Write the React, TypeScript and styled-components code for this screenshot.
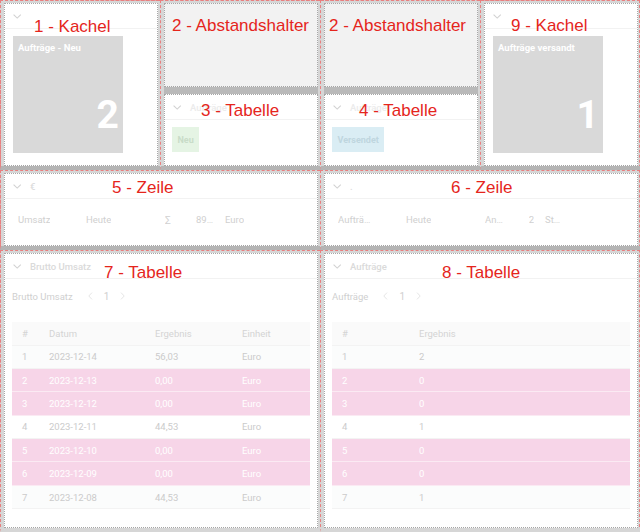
import React from 'react';
import styled, { createGlobalStyle } from 'styled-components';

const GlobalStyle = createGlobalStyle`
  html, body {
    margin: 0;
    padding: 0;
    background: #d6d6d6;
  }
  body {
    font-family: Roboto, "Noto Sans", sans-serif;
  }
  * {
    box-sizing: border-box;
  }
`;

interface LineItem {
  label: string;
  period: string;
  kind: string;
  value: string;
  unit: string;
}

interface TableRow {
  cells: string[];
  alert?: boolean;
}

const umsatzRows: TableRow[] = [
  { cells: ['1', '2023-12-14', '56,03', 'Euro'] },
  { cells: ['2', '2023-12-13', '0,00', 'Euro'], alert: true },
  { cells: ['3', '2023-12-12', '0,00', 'Euro'], alert: true },
  { cells: ['4', '2023-12-11', '44,53', 'Euro'] },
  { cells: ['5', '2023-12-10', '0,00', 'Euro'], alert: true },
  { cells: ['6', '2023-12-09', '0,00', 'Euro'], alert: true },
  { cells: ['7', '2023-12-08', '44,53', 'Euro'] },
];

const auftragRows: TableRow[] = [
  { cells: ['1', '2'] },
  { cells: ['2', '0'], alert: true },
  { cells: ['3', '0'], alert: true },
  { cells: ['4', '1'] },
  { cells: ['5', '0'], alert: true },
  { cells: ['6', '0'], alert: true },
  { cells: ['7', '1'] },
];

function Chevron() {
  return (
    <ChevronIcon width="9" height="5" viewBox="0 0 9 5">
      <path d="M0.6 0.6 L4.2 4.1 L7.8 0.6" fill="none" stroke="currentColor" strokeWidth="1.1" />
    </ChevronIcon>
  );
}

function PagerArrow({ dir }: { dir: 'left' | 'right' }) {
  return (
    <ArrowIcon width="5" height="8" viewBox="0 0 5 8">
      <path
        d={dir === 'left' ? 'M4 0.6 L0.8 4 L4 7.4' : 'M1 0.6 L4.2 4 L1 7.4'}
        fill="none"
        stroke="currentColor"
        strokeWidth="0.9"
      />
    </ArrowIcon>
  );
}

function Header({ title, tone }: { title?: string; tone?: string }) {
  return (
    <PanelHeader>
      <Chevron />
      {title ? <HeaderTitle $tone={tone}>{title}</HeaderTitle> : null}
    </PanelHeader>
  );
}

function Kachel({ title, value }: { title: string; value: string }) {
  return (
    <Panel>
      <Header />
      <KachelBody>
        <Tile>
          <TileTitle>{title}</TileTitle>
          <TileValue>{value}</TileValue>
        </Tile>
      </KachelBody>
    </Panel>
  );
}

function BadgeTable({ label, bg, fg }: { label: string; bg: string; fg: string }) {
  return (
    <Stack>
      <Spacer />
      <Panel>
        <Header title="Aufträge" tone="#ebebeb" />
        <BadgeBody>
          <Badge $bg={bg} $fg={fg}>{label}</Badge>
        </BadgeBody>
      </Panel>
    </Stack>
  );
}

function Zeile({ title, item }: { title: string; item: LineItem }) {
  return (
    <Panel>
      <Header title={title} tone="#dcdcdc" />
      <LineBody>
        <Line>
          <LineCell $max={34}>{item.label}</LineCell>
          <LineCell>{item.period}</LineCell>
          <LineCell $max={20}>{item.kind}</LineCell>
          <LineCell $max={18} $right>{item.value}</LineCell>
          <LineCell $max={19.5} $pad={11}>{item.unit}</LineCell>
        </Line>
      </LineBody>
    </Panel>
  );
}

function Tabelle({
  title,
  columns,
  widths,
  rows,
}: {
  title: string;
  columns: string[];
  widths: number[];
  rows: TableRow[];
}) {
  return (
    <Panel>
      <Header title={title} />
      <TableBody>
        <Pager>
          <PagerLabel>{title}</PagerLabel>
          <PagerNav>
            <PagerArrow dir="left" />
            <PageNumber>1</PageNumber>
            <PagerArrow dir="right" />
          </PagerNav>
        </Pager>
        <DataTable>
          <colgroup>
            {widths.map((w, i) => (
              <col key={i} style={{ width: w }} />
            ))}
          </colgroup>
          <thead>
            <tr>
              {columns.map((c) => (
                <HeadCell key={c}>{c}</HeadCell>
              ))}
            </tr>
          </thead>
          <tbody>
            {rows.map((r, i) => (
              <Row key={i} $tone={r.alert ? 'alert' : i % 2 === 0 ? 'odd' : 'even'}>
                {r.cells.map((c, j) => (
                  <DataCell key={j}>{c}</DataCell>
                ))}
              </Row>
            ))}
          </tbody>
        </DataTable>
      </TableBody>
    </Panel>
  );
}

export default function App() {
  return (
    <>
      <GlobalStyle />
      <Board>
        <Cell>
          <Kachel title="Aufträge - Neu" value="2" />
          <Label $top={17} $left={33}>1 - Kachel</Label>
        </Cell>
        <Cell>
          <BadgeTable label="Neu" bg="#e5f4e4" fg="#c9dcc8" />
          <Label $top={16} $left={11}>2 - Abstandshalter</Label>
          <Label $top={101} $left={40}>3 - Tabelle</Label>
        </Cell>
        <Cell>
          <BadgeTable label="Versendet" bg="#daedf4" fg="#bfd6df" />
          <Label $top={16} $left={8}>2 - Abstandshalter</Label>
          <Label $top={101} $left={38}>4 - Tabelle</Label>
        </Cell>
        <Cell>
          <Kachel title="Aufträge versandt" value="1" />
          <Label $top={16} $left={30}>9 - Kachel</Label>
        </Cell>

        <Cell $span={2}>
          <Zeile
            title="€"
            item={{ label: 'Umsatz', period: 'Heute', kind: '∑', value: '89,06', unit: 'Euro' }}
          />
          <Label $top={8} $left={111}>5 - Zeile</Label>
        </Cell>
        <Cell $span={2}>
          <Zeile
            title="."
            item={{ label: 'Aufträge', period: 'Heute', kind: 'Anzahl', value: '2', unit: 'Stück' }}
          />
          <Label $top={8} $left={130}>6 - Zeile</Label>
        </Cell>

        <Cell $span={2} $last>
          <Tabelle
            title="Brutto Umsatz"
            columns={['#', 'Datum', 'Ergebnis', 'Einheit']}
            widths={[27, 106, 87, 78]}
            rows={umsatzRows}
          />
          <Label $top={13} $left={103}>7 - Tabelle</Label>
        </Cell>
        <Cell $span={2} $last>
          <Tabelle
            title="Aufträge"
            columns={['#', 'Ergebnis']}
            widths={[77, 221]}
            rows={auftragRows}
          />
          <Label $top={13} $left={121}>8 - Tabelle</Label>
        </Cell>
      </Board>
    </>
  );
}

const Board = styled.div`
  position: relative;
  width: 640px;
  height: 532px;
  display: grid;
  grid-template-columns: repeat(4, 160px);
  grid-template-rows: 170px 80px 282px;
  background: #d6d6d6;
  outline: 1px dashed #e88080;
  outline-offset: -1px;
  overflow: hidden;
`;

const Cell = styled.div<{ $span?: number; $last?: boolean }>`
  position: relative;
  grid-column: span ${(p) => p.$span ?? 1};
  display: flex;
  flex-direction: column;
  min-height: 0;
  padding: 2px 2px 0 3px;
  border-top: 1px dashed #e88080;
  border-left: 1px dashed #e88080;
  border-bottom: 4px solid ${(p) => (p.$last ? '#d6d6d6' : '#b4b4b4')};
`;

const Label = styled.div<{ $top: number; $left: number }>`
  position: absolute;
  top: ${(p) => p.$top}px;
  left: ${(p) => p.$left}px;
  font-family: "Liberation Sans", Arial, sans-serif;
  font-size: 17px;
  line-height: 17px;
  color: #e5251c;
  white-space: nowrap;
  pointer-events: none;
`;

const Stack = styled.div`
  flex: 1;
  display: flex;
  flex-direction: column;
  gap: 7px;
  background: #b9b9b9;
`;

const Panel = styled.div`
  flex: 1;
  min-height: 0;
  display: flex;
  flex-direction: column;
  background: #fff;
  border: 1px dotted #a6a6a6;
`;

const Spacer = styled.div`
  flex: 0 0 84px;
  background: #f2f2f2;
  border: 1px dotted #a6a6a6;
`;

const PanelHeader = styled.div`
  flex: 0 0 25px;
  display: flex;
  align-items: center;
  gap: 8px;
  padding: 0 8px;
  border-bottom: 1px solid #f2f2f2;
`;

const ChevronIcon = styled.svg`
  display: block;
  color: #d2d2d2;
`;

const HeaderTitle = styled.span<{ $tone?: string }>`
  font-size: 9.5px;
  font-weight: 500;
  color: ${(p) => p.$tone ?? '#dadada'};
  white-space: nowrap;
`;

const KachelBody = styled.div`
  padding: 7px 8px;
`;

const Tile = styled.div`
  width: 110px;
  height: 117px;
  display: flex;
  flex-direction: column;
  justify-content: space-between;
  padding: 6px 4px 18px 5px;
  background: #d9d9d9;
  color: #fff;
`;

const TileTitle = styled.div`
  font-size: 9.5px;
  font-weight: 700;
  line-height: 12px;
  white-space: nowrap;
`;

const TileValue = styled.div`
  font-size: 39px;
  font-weight: 700;
  line-height: 39px;
  text-align: right;
`;

const BadgeBody = styled.div`
  padding: 7px;
`;

const Badge = styled.span<{ $bg: string; $fg: string }>`
  display: inline-flex;
  align-items: center;
  height: 25px;
  padding: 0 5.5px;
  background: ${(p) => p.$bg};
  color: ${(p) => p.$fg};
  font-size: 9px;
  font-weight: 700;
`;

const LineBody = styled.div`
  padding: 14px 0 0 13px;
`;

const Line = styled.div`
  display: grid;
  grid-template-columns: 68px 79px 26px 23px 40px;
  align-items: center;
  height: 12px;
  font-size: 9.5px;
  color: #d0d0d0;
`;

const LineCell = styled.span<{ $max?: number; $right?: boolean; $pad?: number }>`
  justify-self: ${(p) => (p.$right ? 'end' : 'start')};
  max-width: ${(p) => (p.$max ? `${p.$max + (p.$pad ?? 0)}px` : 'none')};
  padding-left: ${(p) => p.$pad ?? 0}px;
  overflow: hidden;
  text-overflow: ellipsis;
  white-space: nowrap;
`;

const TableBody = styled.div`
  padding: 11px 7px 0;
`;

const Pager = styled.div`
  display: flex;
  align-items: center;
  height: 12px;
  font-size: 9.5px;
`;

const PagerLabel = styled.span`
  color: #d0d0d0;
`;

const PagerNav = styled.div`
  display: flex;
  align-items: center;
  gap: 11px;
  margin-left: 15px;
`;

const ArrowIcon = styled.svg`
  display: block;
  color: #e2e2e2;
`;

const PageNumber = styled.span`
  color: #cfcfcf;
  font-size: 10px;
`;

const DataTable = styled.table`
  width: 100%;
  margin-top: 20px;
  border-collapse: collapse;
  table-layout: fixed;
  font-size: 9.5px;
`;

const HeadCell = styled.th`
  height: 23px;
  padding: 0 0 0 10px;
  text-align: left;
  font-weight: 400;
  color: #d4d4d4;
  background: #fafafa;
  border-bottom: 1px solid #f3f3f3;
`;

const rowBackground = {
  alert: '#f7d5e8',
  odd: '#fbfcfc',
  even: '#ffffff',
};

const Row = styled.tr<{ $tone: 'alert' | 'odd' | 'even' }>`
  height: 23.4px;
  background: ${(p) => rowBackground[p.$tone]};
  color: ${(p) => (p.$tone === 'alert' ? '#ffffff' : '#cbcbcb')};
  border-bottom: 1px solid ${(p) => (p.$tone === 'alert' ? '#fbeaf3' : '#f3f3f3')};
`;

const DataCell = styled.td`
  padding: 0 0 0 10px;
  white-space: nowrap;
  overflow: hidden;
`;
